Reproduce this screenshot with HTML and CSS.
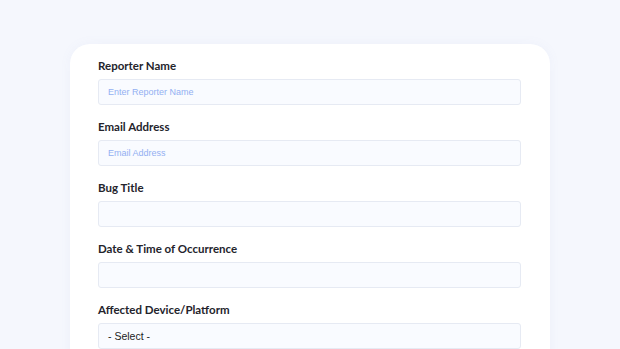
FILE: index.html
```html
<!DOCTYPE html>
<html>
    <head>
        <title>Report a Bug</title>
        <link rel="stylesheet" href="styles.css">
    </head>
    <body>
        <div class="card">
            <div class="field">
                <label for="reporter">Reporter Name</label>
                <input type="text" id="reporter" placeholder="Enter Reporter Name"/>
            </div>
            <div class="field">
                <label for="email">Email Address</label>
                <input type="text" id="email" placeholder="Email Address"/>
            </div>
            <div class="field">
                <label for="title">Bug Title</label>
                <input type="text" id="title"/>
            </div>
            <div class="field">
                <label for="when">Date &amp; Time of Occurrence</label>
                <input type="text" id="when"/>
            </div>
            <div class="field">
                <label for="device">Affected Device/Platform</label>
                <div class="select" id="device">- Select -</div>
            </div>
        </div>
    </body>
</html>
```

FILE: styles.css
```css
body{
    margin: 0;
    padding-top: 44px;
    background-color: #f5f7fd;
    font-family: "Lato", "Noto Sans", sans-serif;
}
.card{
    width: 480px;
    margin: 0 auto;
    box-sizing: border-box;
    background-color: #fff;
    border-radius: 20px 20px 0 0;
    padding: 15px 29px 20px 28px;
    box-shadow: 0 0 12px rgba(120, 140, 200, 0.06);
}
.field{
    margin-bottom: 15px;
}
label{
    display: block;
    height: 14px;
    line-height: 14px;
    font-size: 11.5px;
    font-weight: 700;
    color: #24242c;
    margin-bottom: 6px;
}
input, .select{
    display: block;
    width: 100%;
    height: 26px;
    box-sizing: border-box;
    background-color: #f9fbff;
    border: 1px solid #e6eaf3;
    border-radius: 3px;
    padding: 0 9px;
    font-family: "Liberation Sans", Arial, sans-serif;
    font-size: 9px;
    outline: none;
}
input::placeholder{
    color: #93b0f2;
}
.select{
    line-height: 24px;
    font-size: 10.5px;
    color: #222;
}
```
